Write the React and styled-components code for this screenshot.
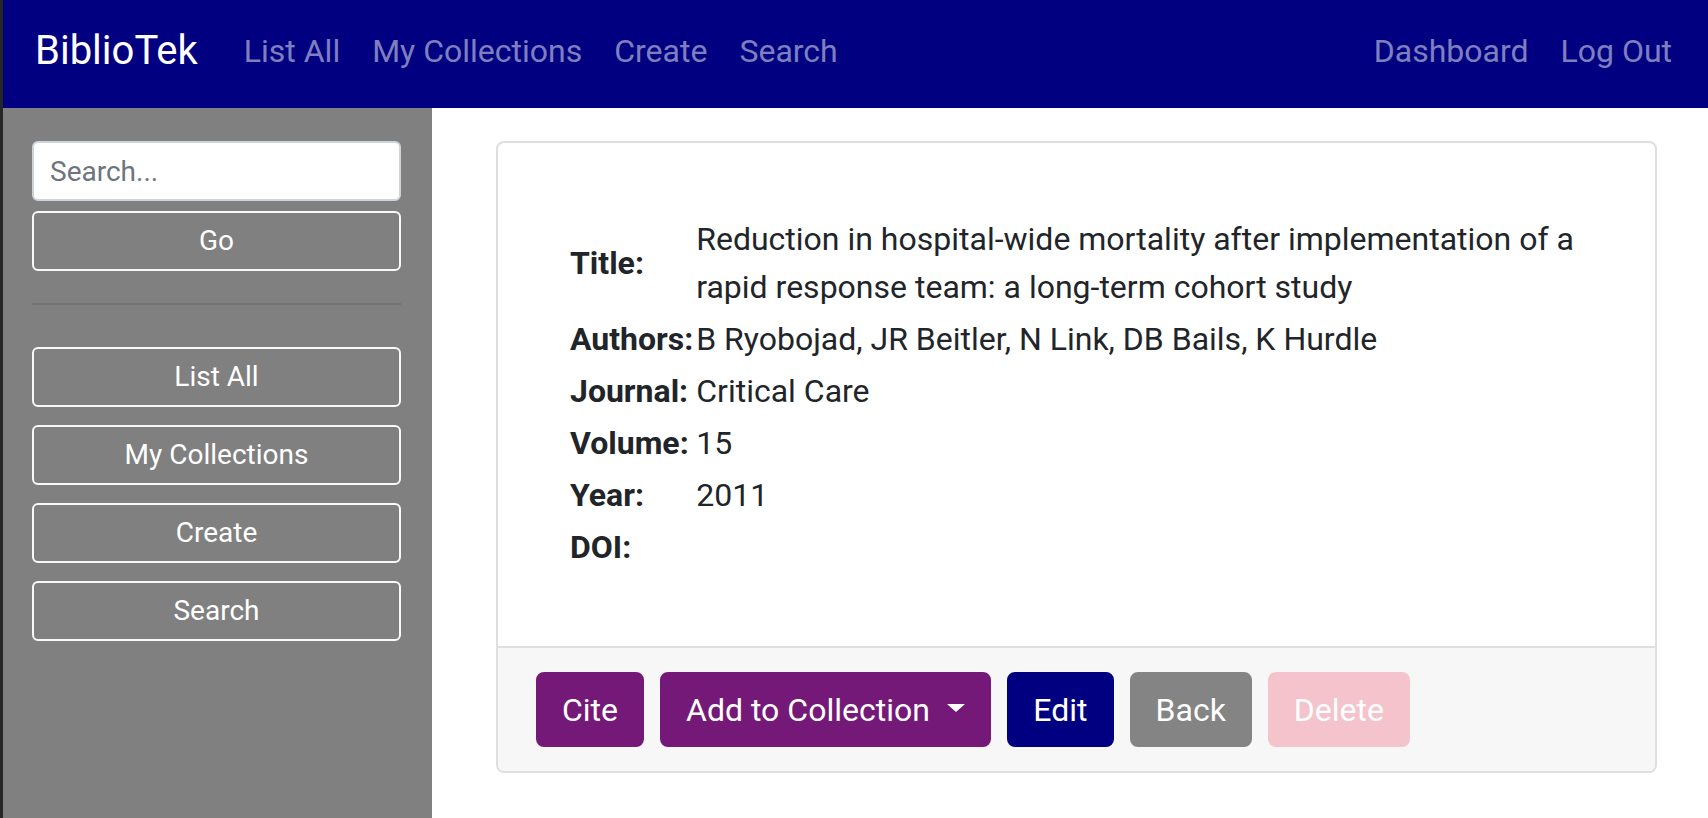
import React from 'react';
import styled, { createGlobalStyle } from 'styled-components';

const GlobalStyle = createGlobalStyle`
  html, body { margin: 0; padding: 0; }
  body {
    font-family: Roboto, "Noto Sans", "Liberation Sans", sans-serif;
    color: #212529;
    background: #ffffff;
  }
  *, *::before, *::after { box-sizing: border-box; }
`;

const Page = styled.div`
  min-height: 100vh;
  display: flex;
  flex-direction: column;
  border-left: 3px solid #262626;
`;

const NavBar = styled.nav`
  height: 108px;
  flex-shrink: 0;
  background: #000080;
  display: flex;
  align-items: center;
  padding: 0 36px 6px 32px;
`;

const Brand = styled.a`
  color: #ffffff;
  font-size: 40px;
  line-height: 1.5;
  text-decoration: none;
  margin-right: 46px;
`;

const NavGroup = styled.div`
  display: flex;
  align-items: center;
  gap: 32px;
  margin-left: ${(p) => (p.$right ? 'auto' : '0')};
`;

const NavLink = styled.a`
  color: rgba(255, 255, 255, 0.5);
  font-size: 32px;
  line-height: 1.5;
  text-decoration: none;
`;

const Body = styled.div`
  flex: 1;
  display: flex;
`;

const Sidebar = styled.aside`
  width: 429px;
  flex-shrink: 0;
  background: #808080;
  padding: 33px 31px 0 29px;
  display: flex;
  flex-direction: column;
`;

const SearchInput = styled.input`
  height: 60px;
  width: 100%;
  border: 2px solid #ced4da;
  border-radius: 6px;
  background: #ffffff;
  padding: 0 16px;
  font-family: inherit;
  font-size: 28px;
  color: #495057;
  outline: none;
  &::placeholder { color: #6c757d; }
`;

const OutlineButton = styled.button`
  height: 60px;
  width: 100%;
  margin-top: ${(p) => p.$mt || 0}px;
  background: transparent;
  border: 2px solid #f8f9fa;
  border-radius: 6px;
  color: #ffffff;
  font-family: inherit;
  font-size: 28px;
  line-height: 1.5;
  padding: 0 16px;
  cursor: pointer;
`;

const Divider = styled.hr`
  border: 0;
  height: 2px;
  background: rgba(0, 0, 0, 0.1);
  margin: 32px 0 42px 0;
`;

const SideNav = styled.div`
  display: flex;
  flex-direction: column;
  gap: 18px;
`;

const Main = styled.main`
  flex: 1;
  padding: 33px 51px 0 64px;
`;

const Card = styled.section`
  border: 2px solid #dfdfdf;
  border-radius: 8px;
  display: flex;
  flex-direction: column;
  overflow: hidden;
`;

const CardBody = styled.div`
  padding: 70px 58px 73px 72px;
`;

const Details = styled.div`
  display: grid;
  grid-template-columns: auto 1fr;
  column-gap: 3px;
  font-size: 32px;
  line-height: 48px;
`;

const Label = styled.div`
  font-weight: 700;
  padding: 2px 0;
  align-self: center;
`;

const Value = styled.div`
  padding: 2px 0;
  min-height: 52px;
`;

const CardFooter = styled.div`
  background: #f7f7f7;
  border-top: 2px solid #dfdfdf;
  padding: 24px 38px;
  display: flex;
  gap: 16px;
`;

const variants = {
  purple: '#751978',
  navy: '#000080',
  gray: '#848484',
  pink: '#f5c3cb',
};

const ActionButton = styled.button`
  background: ${(p) => variants[p.$variant]};
  border: 2px solid ${(p) => variants[p.$variant]};
  color: #ffffff;
  border-radius: 8px;
  font-family: inherit;
  font-size: 32px;
  line-height: 48px;
  padding: 11.5px 24px;
  cursor: ${(p) => (p.disabled ? 'default' : 'pointer')};
  white-space: nowrap;
`;

const Caret = styled.span`
  display: inline-block;
  width: 0;
  height: 0;
  margin-left: 0.3em;
  vertical-align: 0.255em;
  border-top: 0.28em solid;
  border-right: 0.3em solid transparent;
  border-left: 0.3em solid transparent;
`;

const fields = [
  ['Title:', 'Reduction in hospital-wide mortality after implementation of a rapid response team: a long-term cohort study'],
  ['Authors:', 'B Ryobojad, JR Beitler, N Link, DB Bails, K Hurdle'],
  ['Journal:', 'Critical Care'],
  ['Volume:', '15'],
  ['Year:', '2011'],
  ['DOI:', ''],
];

export default function App() {
  return (
    <>
      <GlobalStyle />
      <Page>
        <NavBar>
          <Brand href="#">BiblioTek</Brand>
          <NavGroup>
            <NavLink href="#">List All</NavLink>
            <NavLink href="#">My Collections</NavLink>
            <NavLink href="#">Create</NavLink>
            <NavLink href="#">Search</NavLink>
          </NavGroup>
          <NavGroup $right>
            <NavLink href="#">Dashboard</NavLink>
            <NavLink href="#">Log Out</NavLink>
          </NavGroup>
        </NavBar>
        <Body>
          <Sidebar>
            <SearchInput placeholder="Search..." />
            <OutlineButton $mt={10}>Go</OutlineButton>
            <Divider />
            <SideNav>
              <OutlineButton>List All</OutlineButton>
              <OutlineButton>My Collections</OutlineButton>
              <OutlineButton>Create</OutlineButton>
              <OutlineButton>Search</OutlineButton>
            </SideNav>
          </Sidebar>
          <Main>
            <Card>
              <CardBody>
                <Details>
                  {fields.map(([label, value]) => (
                    <React.Fragment key={label}>
                      <Label>{label}</Label>
                      <Value>{value}</Value>
                    </React.Fragment>
                  ))}
                </Details>
              </CardBody>
              <CardFooter>
                <ActionButton $variant="purple">Cite</ActionButton>
                <ActionButton $variant="purple">
                  Add to Collection{' '}<Caret />
                </ActionButton>
                <ActionButton $variant="navy">Edit</ActionButton>
                <ActionButton $variant="gray">Back</ActionButton>
                <ActionButton $variant="pink" disabled>Delete</ActionButton>
              </CardFooter>
            </Card>
          </Main>
        </Body>
      </Page>
    </>
  );
}
